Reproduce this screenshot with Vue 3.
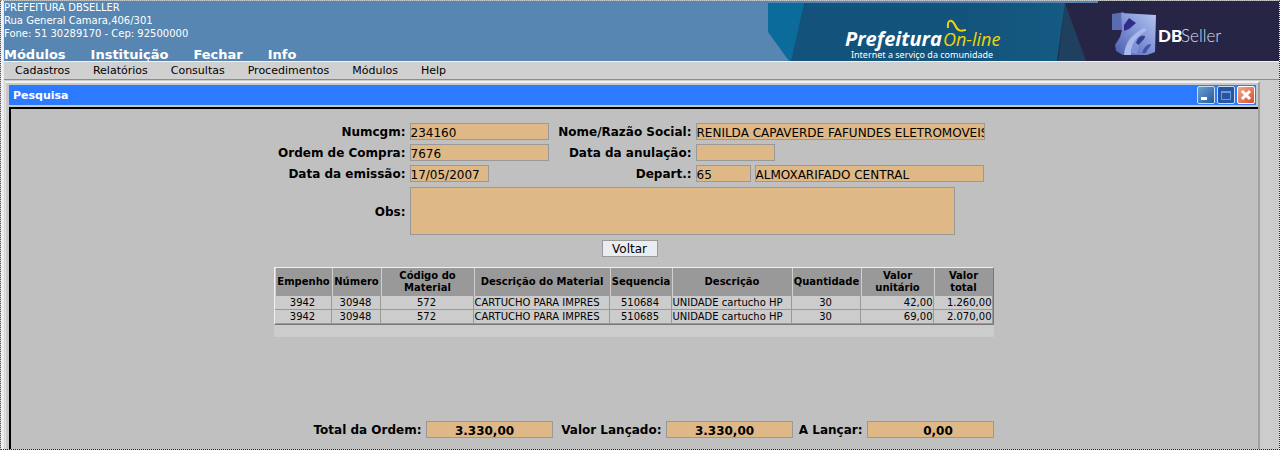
<script setup>
const topLinks = ['Módulos', 'Instituição', 'Fechar', 'Info']
const menus = ['Cadastros', 'Relatórios', 'Consultas', 'Procedimentos', 'Módulos', 'Help']
const columns = [
  { label: 'Empenho', cls: 'w-emp' },
  { label: 'Número', cls: 'w-num' },
  { label: 'Código do Material', cls: 'w-cod' },
  { label: 'Descrição do Material', cls: 'w-mat' },
  { label: 'Sequencia', cls: 'w-seq' },
  { label: 'Descrição', cls: 'w-des' },
  { label: 'Quantidade', cls: 'w-qtd' },
  { label: 'Valor unitário', cls: 'w-uni' },
  { label: 'Valor total', cls: 'w-tot' }
]
const align = ['c', 'c', 'c', 'l', 'c', 'l', 'c', 'r', 'r']
const rows = [
  ['3942', '30948', '572', 'CARTUCHO PARA IMPRES', '510684', 'UNIDADE cartucho HP', '30', '42,00', '1.260,00'],
  ['3942', '30948', '572', 'CARTUCHO PARA IMPRES', '510685', 'UNIDADE cartucho HP', '30', '69,00', '2.070,00']
]
const totals = [
  { id: 'total', label: 'Total da Ordem:', value: '3.330,00', cls: 'sum' },
  { id: 'lancado', label: 'Valor Lançado:', value: '3.330,00', cls: 'sum' },
  { id: 'lancar', label: 'A Lançar:', value: '0,00', cls: 'sum rest' }
]
</script>

<template>
  <div class="page">
    <header class="header">
      <div class="org">
        <div class="address">
          <div>PREFEITURA DBSELLER</div>
          <div>Rua General Camara,406/301</div>
          <div>Fone: 51 30289170 - Cep: 92500000</div>
        </div>
        <nav class="toplinks">
          <a v-for="t in topLinks" :key="t" href="#">{{ t }}</a>
        </nav>
      </div>
      <svg class="banner" viewBox="0 0 511 60" width="511" height="60">
        <defs>
          <linearGradient id="sea" x1="0" x2="1">
            <stop offset="0" stop-color="#12527b" />
            <stop offset="0.7" stop-color="#13547c" />
            <stop offset="1" stop-color="#145a82" />
          </linearGradient>
          <linearGradient id="cube" x1="0" y1="1" x2="1" y2="0">
            <stop offset="0" stop-color="#4a5cae" />
            <stop offset="0.5" stop-color="#8093d6" />
            <stop offset="1" stop-color="#b4c4f0" />
          </linearGradient>
        </defs>
        <path d="M0 2H60V60H21L0 31Z" fill="#0b6c9c" />
        <path d="M36 2H297L290 60H23Z" fill="url(#sea)" />
        <path d="M297 2H330V0H511V60H289Z" fill="#262546" />
        <path d="M297 2L318 60H290Z" fill="#20405f" />
        <text x="77" y="45" class="brand">Prefeitura</text>
        <text x="175" y="45" class="online">On-line</text>
        <path d="M180 27C179 18 184 18 187 24C190 31 193 30 198 29" fill="none" stroke="#f2d500" stroke-width="2" />
        <text x="83" y="57" class="slogan">Internet a serviço da comunidade</text>
        <path d="M344 13L356 11L355 29L344 29Z" fill="#5a6bb0" />
        <path d="M353 12L388 14L387 51L379 54L355 54L348 50L347 44L352 36L354 29Z" fill="url(#cube)" />
        <path d="M356 24L361 17L368 22L361 28L356 30Z" fill="#2f2d88" />
        <path d="M356 54C357 43 362 34 376 27L379 29C368 36 363 43 363 54Z" fill="#a9b9ec" />
        <path d="M363 52C364 44 367 38 372 35L377 36C373 40 371 44 369 53Z" fill="#7d92d8" />
        <path d="M368 42C370 36 373 34 377 35C377 39 373 40 371 44Z" fill="#34408f" />
        <path d="M374 52C376 46 379 43 383 43C382 47 379 48 378 52Z" fill="#4355a6" />
        <text x="390" y="41" class="db">DB</text>
        <text x="413" y="41" class="seller">Seller</text>
      </svg>
    </header>

    <nav class="menubar">
      <a v-for="m in menus" :key="m" href="#">{{ m }}</a>
    </nav>

    <main class="window">
      <div class="titlebar">
        <span>Pesquisa</span>
        <div class="controls">
          <button type="button" class="ctl" aria-label="Minimizar">
            <svg viewBox="0 0 16 16" width="16" height="16"><rect x="3" y="10" width="6" height="3" fill="#fff" /></svg>
          </button>
          <button type="button" class="ctl max" aria-label="Maximizar">
            <svg viewBox="0 0 16 16" width="16" height="16"><path d="M3.500 4.500H12.500V12.500H3.500Z" fill="none" stroke="#6a9ae2" /><path d="M3 5H13" stroke="#6a9ae2" stroke-width="2" /></svg>
          </button>
          <button type="button" class="ctl close" aria-label="Fechar">
            <svg viewBox="0 0 16 16" width="16" height="16"><path d="M4 4L12 12M12 4L4 12" stroke="#fff" stroke-width="3" /></svg>
          </button>
        </div>
      </div>

      <div class="content">
        <form class="form" @submit.prevent>
          <div class="fields">
            <label for="numcgm">Numcgm:</label>
            <input id="numcgm" type="text" value="234160" readonly />
            <label for="nome">Nome/Razão Social:</label>
            <input id="nome" class="name" type="text" value="RENILDA CAPAVERDE FAFUNDES ELETROMOVEIS" readonly />

            <label for="ordem">Ordem de Compra:</label>
            <input id="ordem" type="text" value="7676" readonly />
            <label for="anulacao">Data da anulação:</label>
            <input id="anulacao" class="date" type="text" readonly />

            <label for="emissao">Data da emissão:</label>
            <input id="emissao" class="date" type="text" value="17/05/2007" readonly />
            <label for="depart">Depart.:</label>
            <div class="pair">
              <input id="depart" class="code" type="text" value="65" readonly />
              <input class="dept" type="text" value="ALMOXARIFADO CENTRAL" aria-label="Nome do departamento" readonly />
            </div>
          </div>

          <div class="notes">
            <label for="obs">Obs:</label>
            <textarea id="obs" readonly></textarea>
          </div>

          <button type="button" class="back">Voltar</button>

          <div class="items">
            <table>
              <thead>
                <tr>
                  <th v-for="c in columns" :key="c.label" :class="c.cls">{{ c.label }}</th>
                </tr>
              </thead>
              <tbody>
                <tr v-for="r in rows" :key="r[4]">
                  <td v-for="(v, i) in r" :key="i" :class="align[i]">{{ v }}</td>
                </tr>
              </tbody>
            </table>
          </div>

          <div class="totals">
            <template v-for="t in totals" :key="t.id">
              <label :for="t.id">{{ t.label }}</label>
              <input :id="t.id" :class="t.cls" type="text" :value="t.value" readonly />
            </template>
          </div>
        </form>
      </div>
    </main>
  </div>
</template>

<style>
body {
  background: #ccc;
}
</style>

<style scoped>
.page {
  box-sizing: border-box;
  min-height: 100vh;
  display: flex;
  flex-direction: column;
  border: 1px dotted #222;
  border-top-color: #e39a5a;
  border-left-color: #555;
  padding-left: 3px;
  background: linear-gradient(90deg, #f2f2f6 2px, #ccc 4px);
  font-family: "DejaVu Sans", Verdana, sans-serif;
  color: #000;
}
a {
  color: inherit;
  text-decoration: none;
}
.header {
  display: flex;
  justify-content: space-between;
  height: 60px;
  background: #5786b2;
  color: #fff;
}
.address {
  height: 46px;
  font-size: 10px;
  line-height: 13px;
}
.toplinks {
  display: flex;
  gap: 25px;
  font-size: 13px;
  font-weight: bold;
  line-height: 15px;
}
.banner {
  display: block;
  flex: none;
}
.brand {
  font: italic bold 20px "Open Sans", sans-serif;
  fill: #fff;
}
.online {
  font: italic 18px "Open Sans", sans-serif;
  fill: #f2d500;
}
.slogan {
  font: 9px "Noto Sans", sans-serif;
  fill: #fff;
}
.db {
  font: 900 17px Lato, sans-serif;
  fill: #fff;
}
.seller {
  font: 300 17px Lato, sans-serif;
  fill: #dcdcec;
}
.menubar {
  display: flex;
  gap: 23px;
  padding: 0 11px;
  border-top: 1px solid #f2f2f2;
  border-bottom: 1px solid #8c8c8c;
  background: #d0d0d0;
  font-size: 11px;
  line-height: 17px;
}
.window {
  flex: 1;
  display: flex;
  flex-direction: column;
  margin: 1px 19px 0 1px;
  border-top: 2px solid #f0f0f0;
  border-left: 1px solid #e4e4e4;
  border-right: 2px solid #a0a0a0;
  background: #c8c8c8;
}
.titlebar {
  display: flex;
  align-items: center;
  justify-content: space-between;
  height: 20px;
  margin: 2px 2px 2px 3px;
  padding: 0 1px 0 4px;
  background: #2c7aff;
  color: #fff;
  font-size: 11px;
  font-weight: bold;
}
.controls {
  display: flex;
  gap: 2px;
}
.ctl {
  box-sizing: border-box;
  width: 18px;
  height: 18px;
  padding: 0;
  border: 1px solid #c8dcf4;
  border-radius: 2px;
  background: linear-gradient(135deg, #6c9fd4, #25589c);
}
.ctl svg {
  display: block;
}
.max {
  background: #2855a0;
}
.close {
  border-color: #fff;
  background: linear-gradient(135deg, #f0a890, #d8502c);
}
.content {
  flex: 1;
  margin-left: 3px;
  padding: 14px 2px 10px 0;
  border-top: 2px solid #000;
  border-left: 2px solid #000;
  background: #c0c0c0;
}
.form {
  display: flex;
  flex-direction: column;
  align-items: center;
  width: 720px;
  margin: 0 auto;
}
.fields,
.notes {
  display: grid;
  grid-template-columns: 132px 139px 139px 1fr;
  gap: 4px;
  width: 100%;
}
.notes {
  margin-top: 5px;
}
label {
  align-self: center;
  padding-top: 2px;
  font-size: 12px;
  font-weight: bold;
  line-height: 15px;
  text-align: right;
  white-space: nowrap;
}
input,
textarea {
  box-sizing: border-box;
  min-width: 0;
  margin: 0;
  border: 1px solid #999;
  border-radius: 0;
  background: #deb887;
  color: #000;
  font-family: inherit;
  font-size: 12px;
}
input {
  height: 17px;
  padding: 2px 0 0;
}
.name {
  width: 289px;
}
.date {
  width: 79px;
}
.pair {
  display: flex;
  gap: 4px;
}
.code {
  width: 55px;
}
.dept {
  width: 229px;
}
textarea {
  grid-column: 2 / -1;
  width: 545px;
  height: 48px;
  resize: none;
}
.back {
  box-sizing: border-box;
  width: 56px;
  height: 17px;
  margin: 5px 8px 0 0;
  padding: 1px 0 0;
  border: 1px solid #999;
  background: #e9edf2;
  color: #000;
  font: 12px/14px "DejaVu Sans", sans-serif;
}
.items {
  box-sizing: border-box;
  width: 100%;
  height: 70px;
  margin-top: 10px;
  background: #ccc;
}
table {
  width: 100%;
  table-layout: fixed;
  border-collapse: separate;
  border-spacing: 0;
  border: 1px solid #777;
  border-top-color: #f0f0f0;
  border-left-color: #f0f0f0;
  font-size: 10px;
}
th {
  box-sizing: border-box;
  height: 28px;
  padding: 0;
  border-left: 1px solid #d0d0d0;
  background: #999;
  line-height: 12px;
}
td {
  box-sizing: border-box;
  height: 14px;
  padding: 0;
  border-right: 1px solid #999;
  border-bottom: 1px solid #999;
  line-height: 13px;
  white-space: nowrap;
}
.c {
  text-align: center;
}
.l {
  padding-left: 1px;
  text-align: left;
}
.r {
  text-align: right;
}
.w-emp { width: 57px; }
.w-num { width: 49px; }
.w-cod { width: 93px; }
.w-mat { width: 136px; }
.w-seq { width: 62px; }
.w-des { width: 120px; }
.w-qtd { width: 69px; }
.w-uni { width: 73px; }
.totals {
  display: grid;
  grid-template-columns: 1fr 127px 105px 127px 66px 127px;
  gap: 4px;
  width: 100%;
  margin-top: 84px;
}
.sum {
  padding: 2px 9px 0 0;
  font-weight: bold;
  text-align: center;
}
.rest {
  padding: 2px 0 0 16px;
}
</style>
